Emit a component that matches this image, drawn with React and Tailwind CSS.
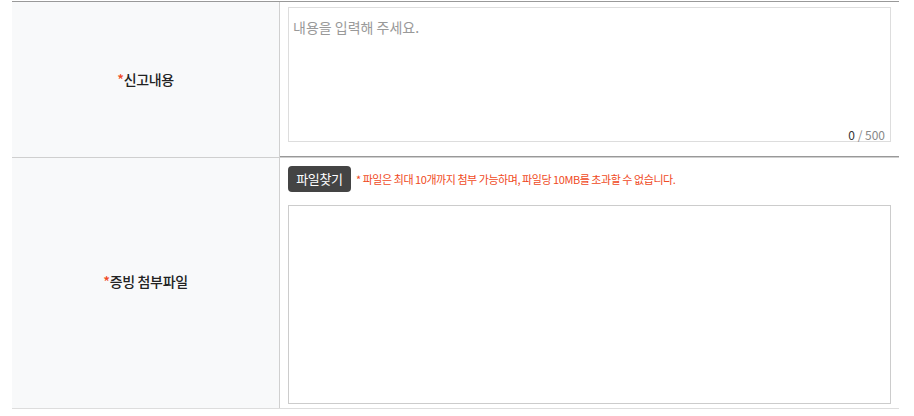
const App = () => {
    const font = { fontFamily: '"Noto Sans CJK KR", "Noto Sans", sans-serif' };
    return (
        <div className="w-[914px] h-[416px] bg-white pl-[12px] pr-[15px] pt-[1px]" style={font}>
            <div className="border-t border-[#999]">
                <div className="flex h-[156px] border-b border-[#cfcfcf]">
                    <div className="w-[268px] bg-[#f8f9fa] border-r border-[#d0d0d0] flex items-center justify-center pb-[1px]">
                        <span className="text-[14px] font-medium text-[#222] tracking-tight"><span className="text-[#f04a24]">*</span>신고내용</span>
                    </div>
                    <div className="flex-1 pl-[8px] pr-[8px] pt-[5px] border-b border-[#999]">
                        <div className="relative h-[135px] border border-[#ddd]">
                            <div className="pl-[4px] pt-[9px] text-[14px] text-[#999]">내용을 입력해 주세요.</div>
                            <div className="absolute right-[5px] bottom-[-3px] text-[12px] text-[#888]"><span className="text-[#333]">0</span> / 500</div>
                        </div>
                    </div>
                </div>
                <div className="flex h-[251px] border-b border-[#ddd]">
                    <div className="w-[268px] bg-[#f8f9fa] border-r border-[#d0d0d0] flex items-center justify-center pb-[4px]">
                        <span className="text-[14px] font-medium text-[#222] tracking-tight"><span className="text-[#f04a24]">*</span>증빙 첨부파일</span>
                    </div>
                    <div className="flex-1 pl-[8px] pr-[8px] pt-[8px]">
                        <div className="flex items-center gap-[5px]">
                            <button className="h-[26px] w-[63px] rounded-[4px] bg-[#444] text-white text-[13px] tracking-tight">파일찾기</button>
                            <span className="text-[11px] text-[#f04a24] tracking-[-0.45px]">* 파일은 최대 10개까지 첨부 가능하며, 파일당 10MB를 초과할 수 없습니다.</span>
                        </div>
                        <div className="mt-[13px] h-[199px] border border-[#ccc]"></div>
                    </div>
                </div>
            </div>
        </div>
    );
};

export default App;
